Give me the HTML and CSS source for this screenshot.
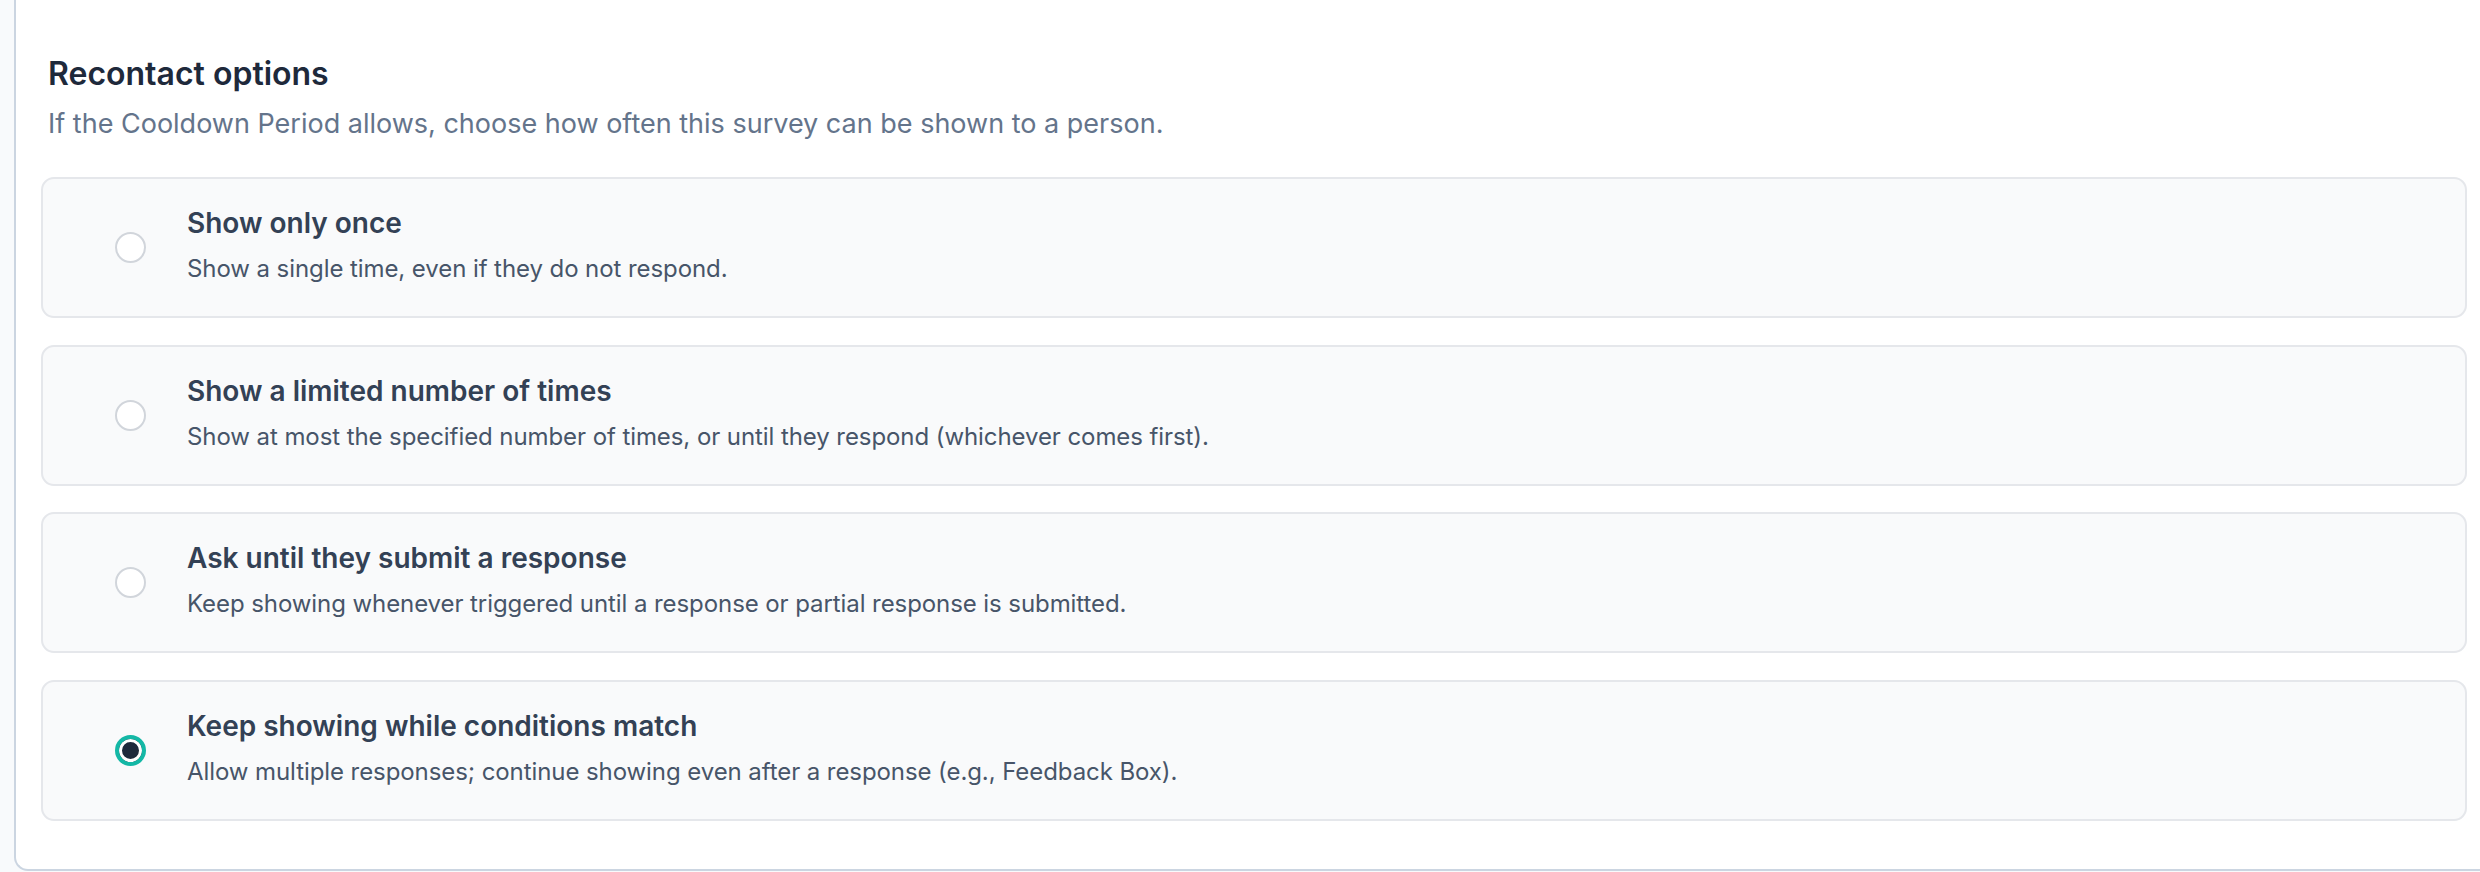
FILE: index.html
```html
<!DOCTYPE html>
<html lang="en">
<head>
<meta charset="utf-8">
<title>Recontact options</title>
<link rel="stylesheet" href="styles.css">
</head>
<body>
<div class="page">
  <section class="panel">
    <header class="panel-head">
      <h2 class="panel-title">Recontact options</h2>
      <p class="panel-sub">If the Cooldown Period allows, choose how often this survey can be shown to a person.</p>
    </header>
    <div class="options">
      <label class="option">
        <span class="radio"></span>
        <span class="option-text">
          <span class="option-title">Show only once</span>
          <span class="option-desc">Show a single time, even if they do not respond.</span>
        </span>
      </label>
      <label class="option">
        <span class="radio"></span>
        <span class="option-text">
          <span class="option-title">Show a limited number of times</span>
          <span class="option-desc">Show at most the specified number of times, or until they respond (whichever comes first).</span>
        </span>
      </label>
      <label class="option">
        <span class="radio"></span>
        <span class="option-text">
          <span class="option-title">Ask until they submit a response</span>
          <span class="option-desc">Keep showing whenever triggered until a response or partial response is submitted.</span>
        </span>
      </label>
      <label class="option">
        <span class="radio radio-checked"></span>
        <span class="option-text">
          <span class="option-title">Keep showing while conditions match</span>
          <span class="option-desc">Allow multiple responses; continue showing even after a response (e.g., Feedback Box).</span>
        </span>
      </label>
    </div>
  </section>
</div>
</body>
</html>
```

FILE: styles.css
```css
* { box-sizing: border-box; }
html, body {
  margin: 0;
  padding: 0;
  background: #f8fafc;
  font-family: Inter, "Noto Sans", "Liberation Sans", sans-serif;
  -webkit-font-smoothing: antialiased;
}
.page {
  height: 872px;
  overflow: hidden;
  padding-left: 14px;
}
.panel {
  margin-top: -20px;
  height: 891px;
  width: 2520px;
  background: #ffffff;
  border-left: 2px solid #cbd5e1;
  border-bottom: 2px solid #cbd5e1;
  border-bottom-left-radius: 14px;
  padding-top: 70px;
}
.panel-head {
  padding-left: 32px;
}
.panel-title {
  margin: 0;
  font-size: 32px;
  line-height: 48px;
  font-weight: 600;
  color: #1e293b;
}
.panel-sub {
  margin: 6px 0 0;
  font-size: 27px;
  line-height: 40px;
  color: #64748b;
}
.options {
  margin-top: 33px;
  padding-left: 25px;
  width: 2451px;
  display: flex;
  flex-direction: column;
  gap: 26.7px;
}
.option {
  display: flex;
  align-items: center;
  gap: 41px;
  height: 141px;
  padding: 0 0 0 72px;
  background: #f9fafb;
  border: 2px solid #e5e7eb;
  border-radius: 13px;
}
.radio {
  flex: none;
  width: 31px;
  height: 31px;
  border-radius: 50%;
  border: 2px solid #d1d5db;
  background: #ffffff;
}
.radio-checked {
  border: 4px solid #14b8a6;
  background: #1e293b;
  box-shadow: inset 0 0 0 3px #ffffff;
}
.option-text {
  display: flex;
  flex-direction: column;
  padding-bottom: 7px;
}
.option-title {
  font-size: 28px;
  line-height: 40px;
  font-weight: 600;
  color: #334155;
}
.option-desc {
  margin-top: 10px;
  font-size: 24px;
  line-height: 32px;
  letter-spacing: -0.08px;
  color: #475569;
}
```
